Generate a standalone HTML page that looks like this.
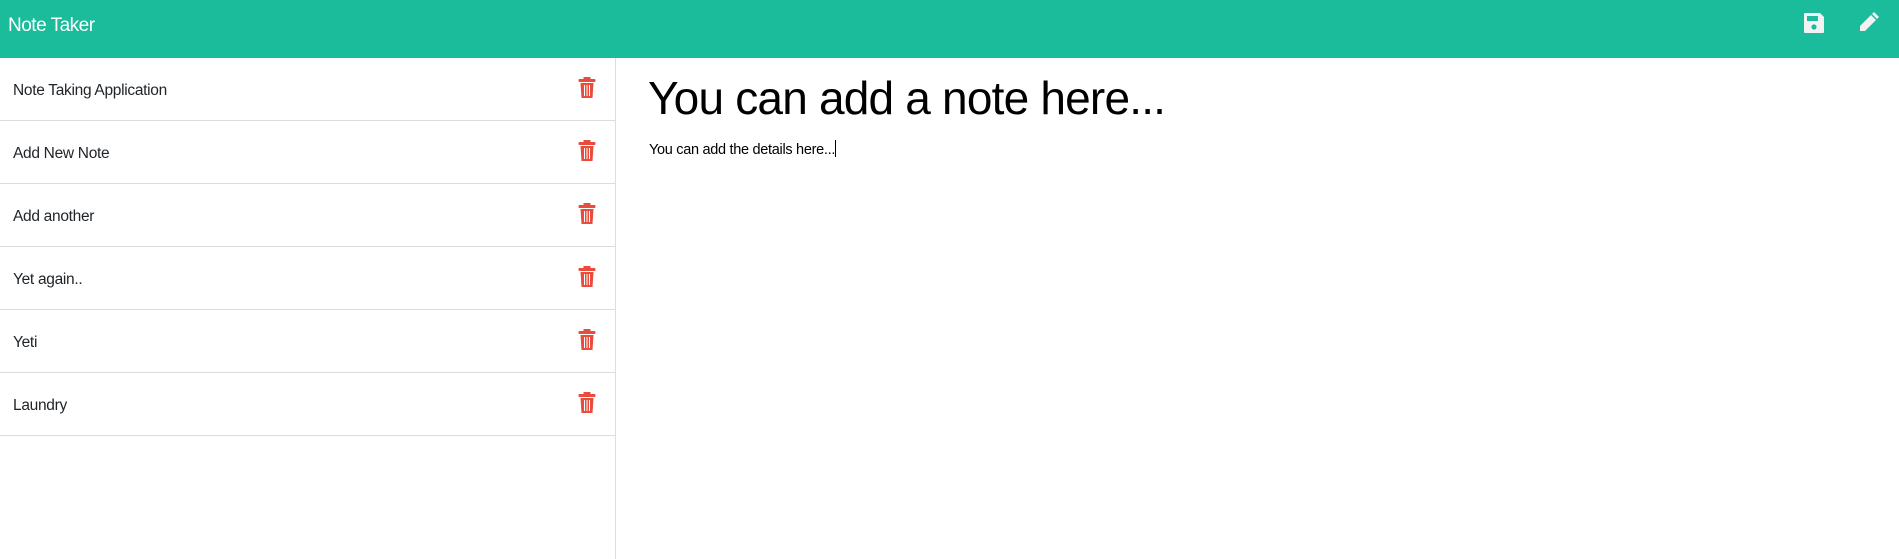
<!DOCTYPE html>
<html><head><meta charset="utf-8"><style>
*{margin:0;padding:0;box-sizing:border-box}
body{width:1899px;height:559px;overflow:hidden;background:#fff;font-family:"Liberation Sans",sans-serif;color:#212529;position:relative}
.hdr{position:absolute;left:0;top:0;width:1899px;height:58px;background:#1abc9c}
.hdr .t{position:absolute;left:8px;top:15px;font-size:19px;color:#fff;letter-spacing:-0.5px}
.list{position:absolute;left:0;top:58px;width:616px;height:501px;border-right:1px solid #ddd}
.row{height:63px;border-bottom:1px solid #dcdcdc;position:relative}
.row span{position:absolute;left:13px;top:24px;font-size:15.5px;letter-spacing:-0.3px}
.row svg{position:absolute;left:578px;top:19px}
.h{position:absolute;left:648px;top:71px;font-size:46px;color:#000;letter-spacing:-0.8px}
.d{position:absolute;left:649px;top:140px;font-size:14.5px;color:#000;letter-spacing:-0.3px}
.d i{display:inline-block;width:1px;height:17px;background:#000;vertical-align:-3px}
</style></head><body>
<div class="hdr"><div class="t">Note Taker</div>
<svg style="position:absolute;left:1803px;top:12px" width="22" height="22" viewBox="0 0 22 22"><path d="M2 1h15l4 4v15a1 1 0 0 1-1 1H2a1 1 0 0 1-1-1V2a1 1 0 0 1 1-1z" fill="#f2f2f2"/><rect x="4" y="4" width="11" height="5" fill="#1abc9c"/><circle cx="11" cy="15" r="2.6" fill="#1abc9c"/></svg>
<svg style="position:absolute;left:1857px;top:10px" width="24" height="24" viewBox="0 0 24 24"><path d="M17 2l5 5L8 21H3v-5z" fill="#f2f2f2"/><path d="M14.5 4.5l5 5" stroke="#1abc9c" stroke-width="1.5"/></svg>
</div>
<div class="list">
<div class="row"><span>Note Taking Application</span><svg width="18" height="21" viewBox="0 0 17 21"><rect x="0" y="2" width="17" height="3" rx="1" fill="#e74c3c"/><rect x="5" y="0" width="7" height="3" fill="#e74c3c"/><path d="M2 6h13l-1 15H3z" fill="#e74c3c"/><path d="M6 8v11M8.5 8v11M11 8v11" stroke="#fff" stroke-width="1"/></svg></div>
<div class="row"><span>Add New Note</span><svg width="18" height="21" viewBox="0 0 17 21"><rect x="0" y="2" width="17" height="3" rx="1" fill="#e74c3c"/><rect x="5" y="0" width="7" height="3" fill="#e74c3c"/><path d="M2 6h13l-1 15H3z" fill="#e74c3c"/><path d="M6 8v11M8.5 8v11M11 8v11" stroke="#fff" stroke-width="1"/></svg></div>
<div class="row"><span>Add another</span><svg width="18" height="21" viewBox="0 0 17 21"><rect x="0" y="2" width="17" height="3" rx="1" fill="#e74c3c"/><rect x="5" y="0" width="7" height="3" fill="#e74c3c"/><path d="M2 6h13l-1 15H3z" fill="#e74c3c"/><path d="M6 8v11M8.5 8v11M11 8v11" stroke="#fff" stroke-width="1"/></svg></div>
<div class="row"><span>Yet again..</span><svg width="18" height="21" viewBox="0 0 17 21"><rect x="0" y="2" width="17" height="3" rx="1" fill="#e74c3c"/><rect x="5" y="0" width="7" height="3" fill="#e74c3c"/><path d="M2 6h13l-1 15H3z" fill="#e74c3c"/><path d="M6 8v11M8.5 8v11M11 8v11" stroke="#fff" stroke-width="1"/></svg></div>
<div class="row"><span>Yeti</span><svg width="18" height="21" viewBox="0 0 17 21"><rect x="0" y="2" width="17" height="3" rx="1" fill="#e74c3c"/><rect x="5" y="0" width="7" height="3" fill="#e74c3c"/><path d="M2 6h13l-1 15H3z" fill="#e74c3c"/><path d="M6 8v11M8.5 8v11M11 8v11" stroke="#fff" stroke-width="1"/></svg></div>
<div class="row"><span>Laundry</span><svg width="18" height="21" viewBox="0 0 17 21"><rect x="0" y="2" width="17" height="3" rx="1" fill="#e74c3c"/><rect x="5" y="0" width="7" height="3" fill="#e74c3c"/><path d="M2 6h13l-1 15H3z" fill="#e74c3c"/><path d="M6 8v11M8.5 8v11M11 8v11" stroke="#fff" stroke-width="1"/></svg></div>
</div>
<div class="h">You can add a note here...</div>
<div class="d">You can add the details here...<i></i></div>
</body></html>
